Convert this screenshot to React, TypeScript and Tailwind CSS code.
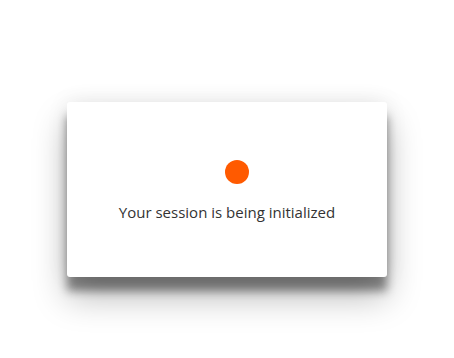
export default function App() {
  return (
    <div className="flex h-screen w-full justify-center bg-white pt-[102px]" style={{ fontFamily: '"Open Sans", sans-serif' }}>
      <div className="flex h-[175px] w-[320px] flex-col items-center rounded-[3px] bg-white pt-[58px] shadow-[0_14px_10px_rgba(0,0,0,0.42),0_20px_34px_rgba(0,0,0,0.28),0_0_22px_rgba(0,0,0,0.08)]">
        <div className="ml-5 h-6 w-6 rounded-full bg-[#ff5a00]" />
        <p className="mt-[18px] text-[15px] leading-[20px] text-[#333333]">Your session is being initialized</p>
      </div>
    </div>
  );
}
